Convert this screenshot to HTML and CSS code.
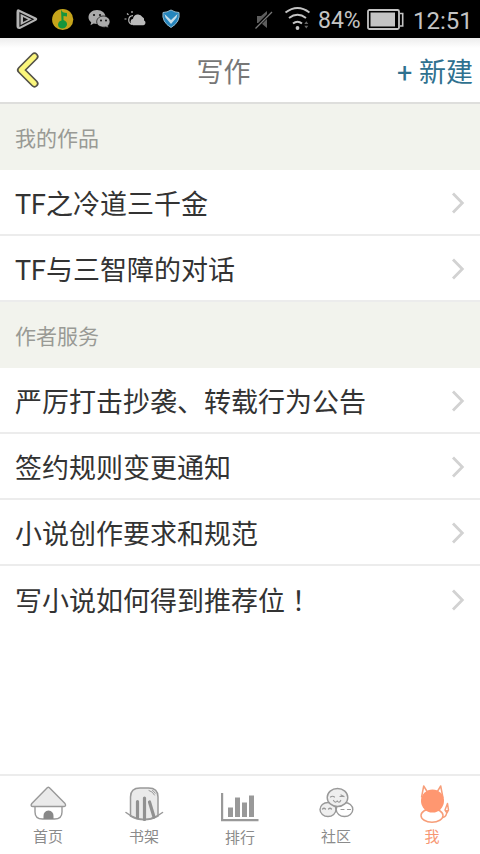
FILE: index.html
```html
<!DOCTYPE html>
<html lang="zh-CN">
<head>
<meta charset="utf-8">
<title>写作</title>
<link rel="stylesheet" href="styles.css">
</head>
<body>
<div class="status">
  <svg class="status-apps" width="200" height="38" viewBox="0 0 200 38" fill="none">
    <path d="M19 9.500 36 17.500Q38.500 19 36 20.800L20 29Q16.500 29.500 16.500 26V12Q16.500 8.500 19 9.500Z" fill="#b4b4b4"/>
    <path d="M20 13 33 19.300 20 26Z" stroke="#111" stroke-width="1.200"/>
    <path d="M23 17 28 19.400 23 22Z" fill="#111"/>
    <circle cx="62.700" cy="19.500" r="10.600" fill="#c5a41b"/>
    <path d="M61 9.500Q62 13 67 13V16.500L63.500 16V20Q67.500 21.500 67 25 65.500 28.500 62 28.500 58 28 58 24.500 58.500 21 61.500 20.500Z" fill="#16953c"/>
    <g fill="#aaa">
      <path d="M97 10c-5 0-8.500 3.500-8.500 7.300 0 2 1 3.700 2.700 5l-.7 3 3.200-1.700c5.500 1.400 11.800-1.600 11.800-6.600C105.500 13 101.800 10 97 10Z"/>
      <path stroke="#000" stroke-width=".7" d="M103.300 16c3.800 0 6.700 2.600 6.700 5.800 0 1.600-.8 3-2 4l.5 2.300-2.600-1.200c-4.400 1.100-9.200-1-9.200-5.100 0-3.200 3-5.800 6.600-5.800Z"/>
    </g>
    <g fill="#111"><circle cx="94" cy="15" r="1.100"/><circle cx="100" cy="15" r="1.100"/><circle cx="101" cy="20.500" r="1"/><circle cx="106" cy="20.500" r="1"/></g>
    <path d="M132 24.500C127.500 23 127.500 16 133 15.700M132 11v2M127 13.500l1.500 1.300M124.500 19h2" stroke="#bbb" stroke-width="1.200"/>
    <path d="M133 25.200a3.300 3.300 0 0 1 0-6.400 5 5 0 0 1 9.400-1.700 3 3 0 0 1 1.700 3.400 2.500 2.500 0 0 1-.6 4.700Z" fill="#bbb"/>
    <path d="M171 10Q175 12.500 179 12.500 180.500 22 171 27.500 161.500 22 163 12.500 167 12.500 171 10Z" fill="#2585bd" stroke="#91b8cd" stroke-width="1"/>
    <path d="M164.500 14 171 20 177.500 14 176.500 17.500 171 24 165.500 17.500Z" fill="#c4dce8"/>
  </svg>
  <svg class="status-signal" width="60" height="38" viewBox="250 0 60 38" fill="none">
    <path d="M257 16h4l6-5v17l-6-5h-4Z" fill="#5d5d5d"/>
    <path d="M255 28.500 272 11.500" stroke="#000" stroke-width="3.200"/>
    <path d="M255.500 28.500 272 12" stroke="#777" stroke-width="1.300"/>
    <path d="M285.500 12.500Q297.500 3.500 309.500 12.500M289 18Q297.500 11.500 306 18M293 23.500Q297.500 20 302 23.500" stroke="#c4c4c4" stroke-width="2"/>
    <circle cx="297.500" cy="28" r="1.900" fill="#c4c4c4"/>
    <path d="m304.300 24 2-2.700 2 2.700Zm0 1.700 2 2.700 2-2.700Z" fill="#666"/>
  </svg>
  <span class="percent">84%</span>
  <svg class="battery" width="38" height="22" viewBox="0 0 38 22">
    <rect x="1" y="1" width="31" height="19" rx="1.500" fill="none" stroke="#c4c4c4" stroke-width="1.800"/>
    <path d="M33 4.500h2.700v12.500H33" fill="none" stroke="#c4c4c4" stroke-width="1.600"/>
    <path d="M3.500 3.500h24.500v14H3.500Z" fill="#c4c4c4"/>
  </svg>
  <span class="clock">12:51</span>
</div>
<header class="header">
  <svg class="back" width="26" height="38" viewBox="0 0 26 38" fill="none" stroke-linecap="round" stroke-linejoin="round">
    <path d="M19.500 5.500 6 19 19.500 32.500" stroke="#545248" stroke-width="8"/>
    <path d="M19.500 5.500 6 19 19.500 32.500" stroke="#fbf67c" stroke-width="4.600"/>
  </svg>
  <h1 class="title">写作</h1>
  <a class="create">+ 新建</a>
</header>
<main class="content">
  <h2 class="section">我的作品</h2>
  <div class="row"><span>TF之冷道三千金</span><svg class="chevron" viewBox="0 0 14 22"><path d="m2 1.500 9.300 9.500L2 20.500"/></svg></div>
  <div class="row"><span>TF与三智障的对话</span><svg class="chevron" viewBox="0 0 14 22"><path d="m2 1.500 9.300 9.500L2 20.500"/></svg></div>
  <h2 class="section">作者服务</h2>
  <div class="row"><span>严厉打击抄袭、转载行为公告</span><svg class="chevron" viewBox="0 0 14 22"><path d="m2 1.500 9.300 9.500L2 20.500"/></svg></div>
  <div class="row"><span>签约规则变更通知</span><svg class="chevron" viewBox="0 0 14 22"><path d="m2 1.500 9.300 9.500L2 20.500"/></svg></div>
  <div class="row"><span>小说创作要求和规范</span><svg class="chevron" viewBox="0 0 14 22"><path d="m2 1.500 9.300 9.500L2 20.500"/></svg></div>
  <div class="row row-last"><span>写小说如何得到推荐位<span class="mark" lang="zh-TW">！</span></span><svg class="chevron" viewBox="0 0 14 22"><path d="m2 1.500 9.300 9.500L2 20.500"/></svg></div>
</main>
<nav class="tabs">
  <a class="tab">
    <svg viewBox="0 0 40 42" fill="none" stroke="#999" stroke-width="1.400" stroke-linejoin="round">
      <path d="M7 23v5q0 7 7.500 7h12Q34 35 34 28v-5" fill="#fff"/>
      <path d="M18.500 4.500Q20.300 2 22.200 4.500L37 19.500Q38.500 22.200 36 22.500H5Q2 22.300 3.800 19.500Z" fill="#eaeaea"/>
      <path d="M15.500 35v-3q0-5 5-5.500 5 .5 5 5.500v3Z" fill="#888" stroke="none"/>
    </svg><span>首页</span>
  </a>
  <a class="tab">
    <svg viewBox="0 0 40 42" fill="none" stroke="#999" stroke-width="1.500" stroke-linecap="round">
      <path d="M6.500 32V13Q6.500 4 16 4h8.500Q34 4 34 13v19Q20 39.500 6.500 32Z" fill="#eaeaea"/>
      <path d="M2 28.500Q20 42.500 38.500 28.500"/>
      <path d="M13.500 17.500v16M20.500 14v21.500M25.500 18l4.500 15" stroke="#919191" stroke-width="3.200"/>
      <path d="M25 6.500q4 1 5.500 4.500M28.500 6.500q2 1 2.700 2.700" stroke-width="1"/>
    </svg><span>书架</span>
  </a>
  <a class="tab tab-rank">
    <svg viewBox="0 0 40 42" fill="#999">
      <path d="M1 9h2.200v26H38.500v2.300H1ZM8 23.500h5V33H8ZM15 13.500h5V33H15ZM22 18.500h5V33H22ZM29 11.500h5V33H29Z"/>
    </svg><span>排行</span>
  </a>
  <a class="tab">
    <svg viewBox="0 0 40 42" fill="#efefef" stroke="#999" stroke-width="1.400" stroke-linecap="round">
      <ellipse cx="12" cy="25.500" rx="8" ry="7"/><ellipse cx="28.500" cy="25.500" rx="8.300" ry="7" fill="#fff"/>
      <ellipse cx="21.500" cy="13.500" rx="10.300" ry="9"/>
      <path fill="none" stroke-width="1.200" d="M14.500 13q2-1.500 4 0M24 12.500h4M25 11l3 1.500M17.500 16.500q1.800 3 3.700.5 2 2.500 3.500-.5M6.500 25q1.500-1.500 3 0M12.500 25q1.500-1.500 3 0M25 25.500h3M31.500 25.500h3"/>
    </svg><span>社区</span>
  </a>
  <a class="tab tab-active">
    <svg viewBox="0 0 40 42" fill="none" stroke="#f79e79" stroke-width="1.500" stroke-linejoin="round">
      <path d="M31 33.500q4-1 4-7.500M33 26l2.500-6.500L36.500 26l-1.500 3Z"/>
      <ellipse cx="20" cy="31.500" rx="11" ry="6.700" fill="#fff"/>
      <path d="M9.500 13.500 11.700 2 16 9M24.500 9l4.200-7L31 14" fill="#fff"/>
      <circle cx="20.500" cy="17" r="11.500" fill="#ff9770" stroke="none"/>
    </svg><span>我</span>
  </a>
</nav>
</body>
</html>
```

FILE: styles.css
```css
* { box-sizing: border-box; }

body {
  margin: 0;
  height: 854px;
  display: flex;
  flex-direction: column;
  background: #fff;
  color: #333;
  font-family: Roboto, "Noto Sans CJK SC", sans-serif;
  overflow: hidden;
}

.status {
  height: 38px;
  flex: none;
  display: flex;
  align-items: center;
  background: #000;
  color: #c4c4c4;
  font-size: 24px;
  line-height: 38px;
}

.status-apps { margin-right: 50px; }
.percent { width: 57px; padding: 3px 0 0 8px; white-space: nowrap; font-size: 23px; }
.battery { margin-top: 1px; }
.clock { margin-left: 8px; padding-top: 3px; font-size: 24px; }

.header {
  height: 66px;
  flex: none;
  display: grid;
  grid-template-columns: 120px 1fr 120px;
  align-items: center;
  padding: 0 7px 0 15px;
  background: linear-gradient(#ededed, #fff 10px);
  border-bottom: 2px solid #dededc;
  line-height: 40px;
}

.back { display: block; }
.title { margin: 0; padding: 6px 41px 0 0; text-align: center; font-size: 27px; font-weight: 400; color: #777; }
.create { padding-top: 6px; text-align: right; font-size: 27px; color: #2f718f; white-space: nowrap; }

.content { flex: 1; }

.section {
  height: 66px;
  margin: 0;
  padding: 2px 15px 0;
  background: #f2f3ed;
  color: #999a95;
  font-size: 21px;
  font-weight: 400;
  line-height: 66px;
}

.row {
  height: 66px;
  display: flex;
  align-items: center;
  justify-content: space-between;
  padding: 0 15px;
  border-bottom: 2px solid #ececec;
  font-size: 27px;
  line-height: 40px;
  white-space: nowrap;
}

.row > span { padding-top: 5px; }
.row-last { border-bottom: 0; }
.row-last > span { padding-top: 4px; }
.mark { font-family: "Noto Sans CJK TC", sans-serif; }

.chevron {
  width: 14px;
  height: 22px;
  margin-top: 2px;
  fill: none;
  stroke: #d2d2d2;
  stroke-width: 2.8;
}

.tabs {
  height: 80px;
  flex: none;
  display: grid;
  grid-template-columns: repeat(5, 1fr);
  border-top: 2px solid #ececec;
  color: #8b8b8b;
}

.tab {
  display: flex;
  flex-direction: column;
  align-items: center;
  padding-top: 8px;
  font-size: 15px;
  line-height: 22px;
}

.tab svg { width: 40px; height: 42px; }
.tab-rank span { padding-top: 1px; }
.tab-active { color: #f79672; }
```
